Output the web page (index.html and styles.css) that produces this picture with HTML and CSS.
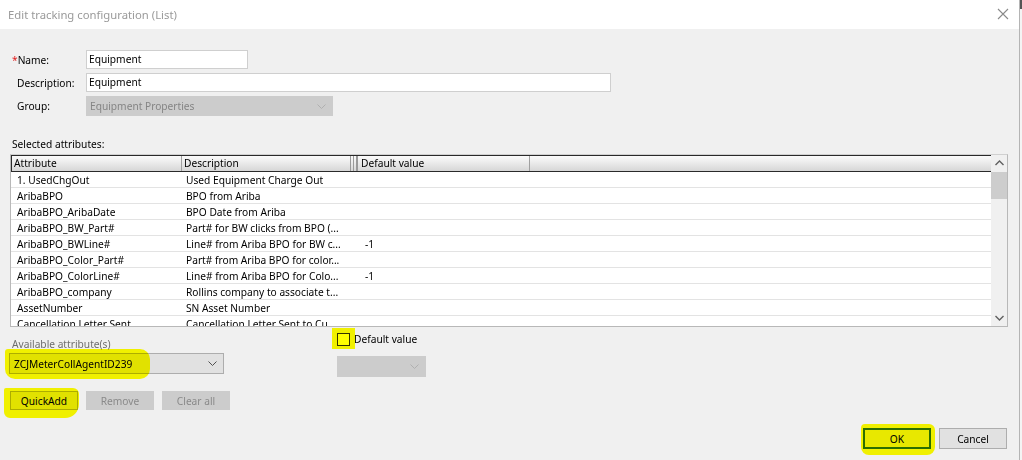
FILE: index.html
```html
<!DOCTYPE html>
<html lang="en">
<head>
    <meta charset="UTF-8">
    <title>Edit tracking configuration (List)</title>
    <link rel="stylesheet" href="styles.css">
</head>
<body>
    <div class="window">
        <div class="dialog">
            <div class="titlebar">
                <span class="title">Edit tracking configuration (List)</span>
                <span class="close">
                    <svg width="12" height="12" viewBox="0 0 12 12"><path d="M1 1L11 11M11 1L1 11" stroke="#8a8a8a" stroke-width="1.1" fill="none"/></svg>
                </span>
            </div>

            <div class="body">
                <div class="fields">
                    <label class="lbl first"><span class="req">*</span>Name:</label>
                    <div class="input short">Equipment</div>
                    <label class="lbl">Description:</label>
                    <div class="input long">Equipment</div>
                    <label class="lbl">Group:</label>
                    <div class="select disabled group">
                        <span>Equipment Properties</span>
                        <svg class="chev" width="9" height="5" viewBox="0 0 9 5"><path d="M0.5 0.5L4.5 4.5L8.5 0.5" stroke="#b0b0b0" fill="none"/></svg>
                    </div>
                </div>

                <div class="section-label">Selected attributes:</div>

                <div class="attr-table">
                    <div class="list">
                        <div class="thead">
                            <div class="th c1">Attribute</div>
                            <div class="th c2">Description</div>
                            <div class="grip"></div>
                            <div class="th c3">Default value</div>
                            <div class="th c4"></div>
                        </div>
                        <div class="rows">
                            <div class="row"><span class="c1">1. UsedChgOut</span><span class="c2">Used Equipment Charge Out</span><span class="c3"></span></div>
                            <div class="row"><span class="c1">AribaBPO</span><span class="c2">BPO from Ariba</span><span class="c3"></span></div>
                            <div class="row"><span class="c1">AribaBPO_AribaDate</span><span class="c2">BPO Date from Ariba</span><span class="c3"></span></div>
                            <div class="row"><span class="c1">AribaBPO_BW_Part#</span><span class="c2">Part# for BW clicks from BPO (...</span><span class="c3"></span></div>
                            <div class="row"><span class="c1">AribaBPO_BWLine#</span><span class="c2">Line# from Ariba BPO for BW c...</span><span class="c3">-1</span></div>
                            <div class="row"><span class="c1">AribaBPO_Color_Part#</span><span class="c2">Part# from Ariba BPO for color...</span><span class="c3"></span></div>
                            <div class="row"><span class="c1">AribaBPO_ColorLine#</span><span class="c2">Line# from Ariba BPO for Colo...</span><span class="c3">-1</span></div>
                            <div class="row"><span class="c1">AribaBPO_company</span><span class="c2">Rollins company to associate t...</span><span class="c3"></span></div>
                            <div class="row"><span class="c1">AssetNumber</span><span class="c2">SN Asset Number</span><span class="c3"></span></div>
                            <div class="row"><span class="c1">Cancellation Letter Sent</span><span class="c2">Cancellation Letter Sent to Cu...</span><span class="c3"></span></div>
                        </div>
                    </div>
                    <div class="vscroll">
                        <svg class="arrow" width="9" height="6" viewBox="0 0 9 6"><path d="M0.5 5L4.5 1L8.5 5" stroke="#606060" stroke-width="1.4" fill="none"/></svg>
                        <div class="thumb"></div>
                        <div class="track"></div>
                        <svg class="arrow" width="9" height="6" viewBox="0 0 9 6"><path d="M0.5 1L4.5 5L8.5 1" stroke="#606060" stroke-width="1.4" fill="none"/></svg>
                    </div>
                </div>

                <div class="lower">
                    <div class="avail">
                        <div class="muted">Available attribute(s)</div>
                        <div class="select combo marked">
                            <span>ZCJMeterCollAgentID239</span>
                            <svg class="chev" width="9" height="5" viewBox="0 0 9 5"><path d="M0.5 0.5L4.5 4.5L8.5 0.5" stroke="#505050" fill="none"/></svg>
                        </div>
                        <div class="actions">
                            <button class="btn marked">QuickAdd</button>
                            <button class="btn off">Remove</button>
                            <button class="btn off">Clear all</button>
                        </div>
                    </div>
                    <div class="defval">
                        <label class="check"><span class="box"></span>Default value</label>
                        <div class="select disabled small">
                            <span></span>
                            <svg class="chev" width="9" height="5" viewBox="0 0 9 5"><path d="M0.5 0.5L4.5 4.5L8.5 0.5" stroke="#b0b0b0" fill="none"/></svg>
                        </div>
                    </div>
                </div>

                <div class="footer">
                    <button class="btn ok marked">OK</button>
                    <button class="btn">Cancel</button>
                </div>
            </div>
        </div>
        <div class="edge"></div>
    </div>
</body>
</html>
```

FILE: styles.css
```css
body {
    margin: 0;
    font-family: "Noto Sans", "Open Sans", sans-serif;
    font-size: 10.2px;
    color: #000;
    background: #f0f0f0;
}
.window {
    display: flex;
    width: 1022px;
    height: 460px;
    overflow: hidden;
}
.dialog {
    width: 1019px;
    display: flex;
    flex-direction: column;
    background: #f0f0f0;
}
.edge {
    width: 2px;
    border-left: 1px solid #b4b4b4;
    background: linear-gradient(#555 0, #555 9px, #f4f4f4 9px);
}

/* title bar */
.titlebar {
    height: 29px;
    background: #fff;
    display: flex;
    align-items: center;
    justify-content: space-between;
    padding: 0 10px 0 8px;
}
.title {
    font-size: 11.3px;
    color: #9a9a9a;
}
.close {
    display: flex;
    margin-top: -1px;
}

.body {
    padding: 21px 12px 0 10px;
    display: flex;
    flex-direction: column;
}

/* top fields */
.fields {
    display: grid;
    grid-template-columns: 76px auto;
    row-gap: 4px;
    justify-items: start;
    align-items: center;
}
.lbl {
    padding-left: 7px;
}
.lbl.first {
    padding-left: 2px;
}
.req {
    color: #e02020;
}
.input {
    height: 17px;
    line-height: 17px;
    background: #fff;
    border: 1px solid #cfcfcf;
    padding: 0 2px;
    box-sizing: content-box;
}
.input.short { width: 156px; }
.input.long { width: 519px; }

.select {
    display: flex;
    align-items: center;
    justify-content: space-between;
    box-sizing: border-box;
    padding: 0 6px 0 3px;
}
.select.disabled {
    background: #cccccc;
    border: 1px solid #cccccc;
    color: #858585;
}
.select.group {
    width: 247px;
    height: 20px;
}

.section-label {
    margin-top: 20px;
    line-height: 16px;
    padding-left: 2px;
    margin-bottom: 2px;
}

/* attributes table */
.attr-table {
    display: flex;
    height: 173px;
    width: 998px;
    box-sizing: border-box;
    border: 1px solid #b8b8b8;
    border-top-color: #d0d0d0;
    background: #fff;
}
.list {
    flex: 1;
    overflow: hidden;
}
.thead {
    display: flex;
    height: 15px;
    border-top: 1px solid #2a2a2a;
    border-bottom: 1px solid #2a2a2a;
    border-left: 1px solid #2a2a2a;
    background: linear-gradient(#fbfbfb, #e9e9e9 50%, #d6d6d6);
    line-height: 15px;
}
.th {
    box-sizing: border-box;
    padding-left: 2px;
    border-right: 1px solid #a0a0a0;
    white-space: nowrap;
}
.th.c1 { width: 170px; }
.th.c2 { width: 168px; border-right: none; }
.grip {
    width: 8px;
    border-left: 1px solid #9a9a9a;
    border-right: 1px solid #9a9a9a;
    background: linear-gradient(90deg, transparent 2px, #9a9a9a 2px, #9a9a9a 3px, transparent 3px, transparent 5px, #9a9a9a 5px, #9a9a9a 6px, transparent 6px);
    box-sizing: border-box;
}
.th.c3 { width: 172px; padding-left: 3px; }
.th.c4 { flex: 1; border-right: none; }

.row {
    display: flex;
    height: 14px;
    padding-top: 1px;
    line-height: 15px;
    border-bottom: 1px solid #e3e3e3;
    white-space: nowrap;
}
.row .c1 { width: 169px; padding-left: 6px; box-sizing: border-box; }
.row .c2 { width: 178px; padding-left: 6px; box-sizing: border-box; overflow: hidden; }
.row .c3 { padding-left: 7px; }

.vscroll {
    width: 16px;
    background: #f0f0f0;
    display: flex;
    flex-direction: column;
    align-items: center;
}
.vscroll .arrow {
    margin: 5px 0 6px;
}
.vscroll .arrow:last-child {
    margin: 4px 0 5px;
}
.thumb {
    align-self: stretch;
    height: 27px;
    background: #cdcdcd;
}
.track {
    flex: 1;
}

/* lower section */
.lower {
    display: flex;
}
.avail {
    margin-left: -1px;
    width: 215px;
    padding-top: 9px;
}
.muted {
    color: #6d6d6d;
    line-height: 16px;
    padding-left: 3px;
    margin-bottom: 1px;
}
.select.combo {
    height: 21px;
    background: #e1e1e1;
    border: 1px solid #adadad;
    padding-left: 4px;
}
.actions {
    display: flex;
    gap: 8px;
    margin-top: 17px;
    margin-left: 1px;
}
.btn {
    flex-shrink: 0;
    font-family: inherit;
    font-size: 10.2px;
    width: 68px;
    height: 19px;
    padding: 0;
    background: #e1e1e1;
    border: 1px solid #adadad;
    color: #000;
}
.btn.off {
    background: #cccccc;
    border-color: #cccccc;
    color: #8a8a8a;
}

.defval {
    margin-left: 113px;
    padding-top: 5px;
}
.check {
    display: flex;
    align-items: center;
    line-height: 14px;
    position: relative;
}
.check::before {
    content: "";
    position: absolute;
    left: -5px;
    top: -4px;
    width: 23px;
    height: 21px;
    background: #ffff00;
    mix-blend-mode: multiply;
}
.box {
    width: 11px;
    height: 11px;
    border: 1px solid #333;
    background: #ffff00;
    margin-right: 4px;
}
.select.small {
    width: 89px;
    height: 21px;
    margin-top: 10px;
}

.footer {
    display: flex;
    justify-content: flex-end;
    gap: 8px;
    margin-top: 18px;
}
.footer .btn {
    height: 21px;
}
.btn.ok {
    border: 2px solid #2c6e2c;
    background: #e8e800;
}

/* yellow highlighter marks */
.marked {
    position: relative;
}
.marked::after {
    content: "";
    position: absolute;
    background: #ffff00;
    mix-blend-mode: multiply;
    border-radius: 4px;
    pointer-events: none;
}
.select.combo.marked::after {
    left: -5px;
    top: -5px;
    width: 145px;
    height: 30px;
    border-radius: 3px 10px 10px 10px;
}
.actions .btn.marked::after {
    left: -7px;
    top: -4px;
    width: 75px;
    height: 30px;
    border-radius: 2px 6px 14px 6px;
}
.btn.ok.marked::after {
    left: -4px;
    top: -6px;
    width: 74px;
    height: 31px;
    border-radius: 4px 6px 8px 8px;
}
```
